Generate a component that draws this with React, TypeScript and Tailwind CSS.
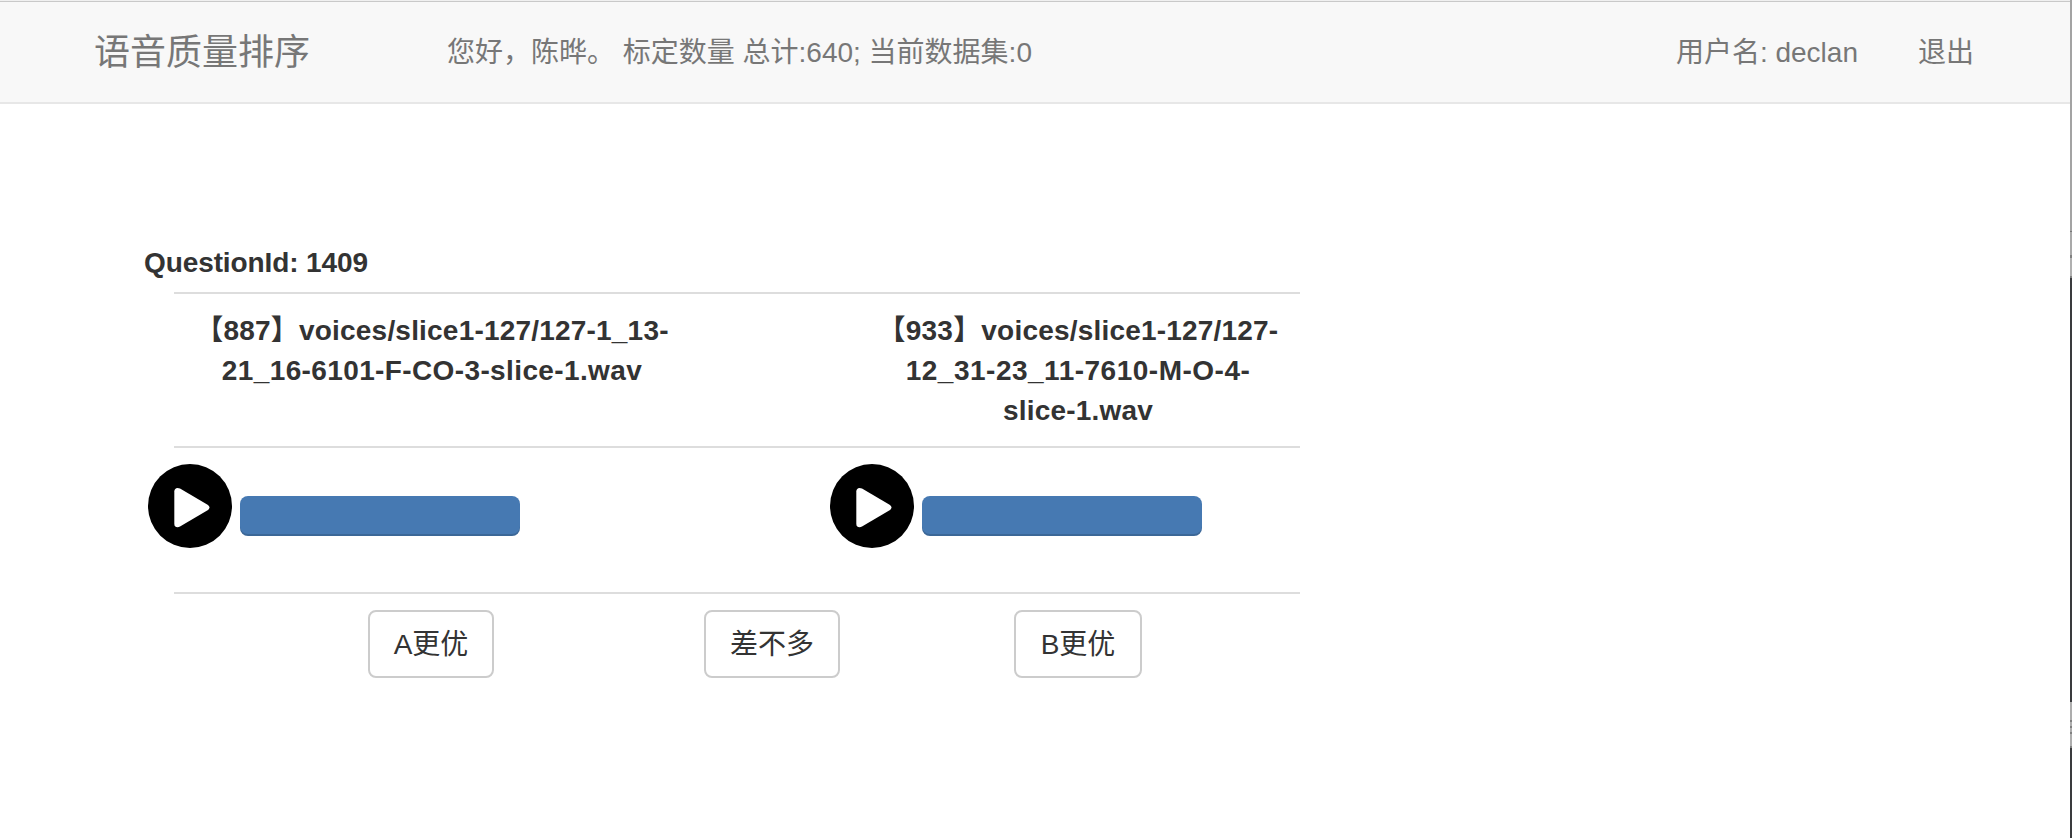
const edge: { color: string; height: number }[] = [
  { color: "bg-[#a3a3a3]", height: 231 },
  { color: "bg-[#777777]", height: 1 },
  { color: "bg-[#a9a9a9]", height: 23 },
  { color: "bg-[#808080]", height: 3 },
  { color: "bg-[#b0b0b0]", height: 18 },
  { color: "bg-[#808080]", height: 2 },
  { color: "bg-[#3a3b3e]", height: 424 },
  { color: "bg-[#adadad]", height: 18 },
  { color: "bg-[#808080]", height: 2 },
  { color: "bg-[#adadad]", height: 4 },
  { color: "bg-[#808080]", height: 2 },
  { color: "bg-[#adadad]", height: 4 },
  { color: "bg-[#808080]", height: 2 },
  { color: "bg-[#adadad]", height: 12 },
  { color: "bg-[#808080]", height: 2 },
  { color: "bg-[#3a3b3e]", height: 90 },
];

function PlayIcon() {
  return (
    <svg width="84" height="84" viewBox="0 0 84 84" className="block shrink-0">
      <circle cx="42" cy="42" r="42" fill="#000" />
      <path
        d="M26.3 27.5C26.3 24.2 29.2 23 32 24.6L59.2 40.4C62.2 42.2 62.2 44.8 59.2 46.6L32 62.6C29.2 64.2 26.3 63 26.3 59.7Z"
        fill="#fff"
      />
    </svg>
  );
}

function Player() {
  return (
    <div className="flex w-[682px] shrink-0 gap-2">
      <PlayIcon />
      <div className="mt-8 h-10 w-[280px] rounded-lg bg-[#4679b2] shadow-[inset_0_-2px_0_rgba(0,0,0,0.15)]" />
    </div>
  );
}

function Choice({ label, box }: { label: string; box: string }) {
  return (
    <button
      className={`flex h-[68px] items-center justify-center rounded-lg border-2 border-[#cccccc] bg-white pt-0.5 whitespace-nowrap ${box}`}
    >
      {label}
    </button>
  );
}

export default function App() {
  return (
    <div className="flex h-[838px] w-[2072px] overflow-hidden bg-white font-['Liberation_Sans','Noto_Sans_CJK_SC',sans-serif] text-[28px] leading-10 text-[#333333]">
      <div className="flex w-[2070px] flex-col">
        <header className="flex h-[104px] shrink-0 flex-col border-b-2 border-[#e7e7e7] bg-[#f8f8f8]">
          <div className="h-0.5 shrink-0 border-b border-[#c9c9c9] bg-[#f0f0f0]" />
          <nav className="flex h-[100px] items-center pt-0.5 text-[#777777]">
            <div className="w-[353px] pl-[94px] text-[36px] whitespace-nowrap">语音质量排序</div>
            <div className="ml-[94px] grow whitespace-pre">您好，陈晔。 标定数量 总计:640; 当前数据集:0</div>
            <div className="mr-[60px] whitespace-nowrap">用户名: declan</div>
            <div className="mr-[96px] whitespace-nowrap">退出</div>
          </nav>
        </header>
        <main className="flex flex-col pt-[139px]">
          <h1 className="mb-[9px] ml-36 font-bold tracking-[-0.1px]">QuestionId: 1409</h1>
          <section className="ml-[174px] flex h-[154px] w-[1126px] border-t-2 border-[#dddddd] pt-[17px] text-center font-bold">
            <div className="w-[516px] whitespace-nowrap">
              <div className="tracking-[0.2px]">【887】voices/slice1-127/127-1_13-</div>
              <div className="tracking-[0.38px]">21_16-6101-F-CO-3-slice-1.wav</div>
            </div>
            <div className="ml-[166px] w-[444px] whitespace-nowrap">
              <div className="tracking-[0.2px]">【933】voices/slice1-127/127-</div>
              <div className="tracking-[0.5px]">12_31-23_11-7610-M-O-4-</div>
              <div className="tracking-[0.2px]">slice-1.wav</div>
            </div>
          </section>
          <section className="ml-[174px] h-[146px] w-[1126px] border-t-2 border-[#dddddd] pt-4">
            <div className="-ml-[26px] flex">
              <Player />
              <Player />
            </div>
          </section>
          <section className="ml-[174px] flex w-[1126px] border-t-2 border-[#dddddd] pt-4">
            <Choice label="A更优" box="ml-[194px] w-[126px]" />
            <Choice label="差不多" box="ml-[210px] w-[136px]" />
            <Choice label="B更优" box="ml-[174px] w-[128px]" />
          </section>
        </main>
      </div>
      <div className="flex w-0.5 flex-col">
        {edge.map((part, i) => (
          <div key={i} className={`shrink-0 ${part.color}`} style={{ height: part.height }} />
        ))}
      </div>
    </div>
  );
}
